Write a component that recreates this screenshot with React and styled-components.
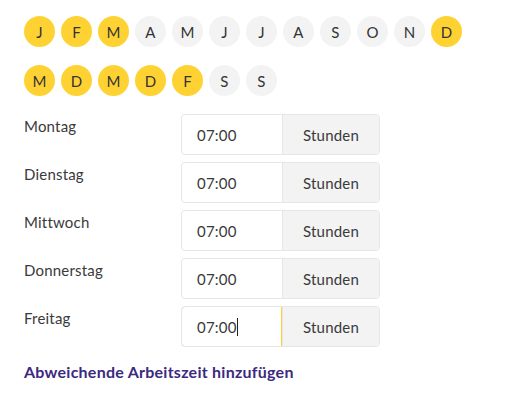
import React from "react";
import styled, { createGlobalStyle } from "styled-components";

const GlobalStyle = createGlobalStyle`
  body {
    margin: 0;
    background: #ffffff;
    font-family: Lato, "Open Sans", sans-serif;
    color: #333333;
    letter-spacing: 0.2px;
  }
`;

const Page = styled.div`
  padding: 16px 24px;
`;

const DotRow = styled.div`
  display: flex;
  gap: 6px;
  margin-bottom: 18px;
`;

const Dot = styled.div`
  width: 31px;
  height: 31px;
  border-radius: 50%;
  display: flex;
  align-items: center;
  justify-content: center;
  font-size: 15px;
  color: #333333;
  background: ${(p) => (p.active ? "#ffd233" : "#f3f3f3")};
`;

const Rows = styled.div`
  display: flex;
  flex-direction: column;
  gap: 7px;
`;

const Row = styled.div`
  display: grid;
  grid-template-columns: 157px 199px;
`;

const Label = styled.div`
  font-size: 15px;
  line-height: 20px;
  padding-top: 2px;
  color: #3a3a3a;
`;

const Field = styled.div`
  display: flex;
  height: 41px;
  border: 1px solid #e6e6e6;
  border-radius: 4px;
  box-sizing: border-box;
  overflow: hidden;
`;

const TimeValue = styled.div`
  width: 101px;
  box-sizing: border-box;
  display: flex;
  align-items: center;
  padding-left: 15px;
  font-size: 15px;
  color: #3a3a3a;
  border: 1px solid ${(p) => (p.focused ? "#ffd233" : "transparent")};
  border-radius: 4px 0 0 4px;
  margin: -1px 0 -1px -1px;
`;

const Caret = styled.span`
  display: inline-block;
  width: 1px;
  height: 18px;
  background: #222222;
`;

const Unit = styled.div`
  flex: 1;
  display: flex;
  align-items: center;
  justify-content: center;
  background: #f3f3f3;
  border-left: 1px solid #e6e6e6;
  font-size: 15px;
  color: #3a3a3a;
`;

const AddLink = styled.a`
  display: block;
  margin-top: 15px;
  font-size: 16px;
  font-weight: 700;
  letter-spacing: 0.25px;
  color: #3b2a80;
  text-decoration: none;
  cursor: pointer;
`;

const months = [
  ["J", true], ["F", true], ["M", true], ["A", false], ["M", false], ["J", false],
  ["J", false], ["A", false], ["S", false], ["O", false], ["N", false], ["D", true],
];

const weekdays = [
  ["M", true], ["D", true], ["M", true], ["D", true], ["F", true], ["S", false], ["S", false],
];

const days = ["Montag", "Dienstag", "Mittwoch", "Donnerstag", "Freitag"];

export default function App() {
  return (
    <>
      <GlobalStyle />
      <Page>
        <DotRow>
          {months.map(([l, a], i) => (
            <Dot key={i} active={a}>{l}</Dot>
          ))}
        </DotRow>
        <DotRow>
          {weekdays.map(([l, a], i) => (
            <Dot key={i} active={a}>{l}</Dot>
          ))}
        </DotRow>
        <Rows>
          {days.map((d) => {
            const focused = d === "Freitag";
            return (
              <Row key={d}>
                <Label>{d}</Label>
                <Field>
                  <TimeValue focused={focused}>
                    07:00
                    {focused && <Caret />}
                  </TimeValue>
                  <Unit>Stunden</Unit>
                </Field>
              </Row>
            );
          })}
        </Rows>
        <AddLink>Abweichende Arbeitszeit hinzufügen</AddLink>
      </Page>
    </>
  );
}
